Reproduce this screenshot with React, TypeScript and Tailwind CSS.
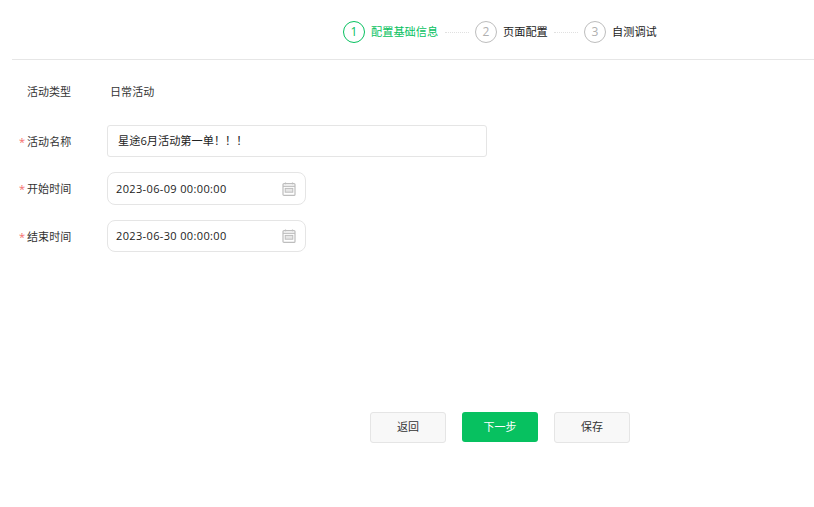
const font = "[font-family:'Open_Sans','Noto_Sans_CJK_SC',sans-serif]";

function Calendar() {
  return (
    <svg width="14" height="14" viewBox="0 0 14 14" fill="none" stroke="#bdbdbd" strokeWidth="1.2">
      <rect x="1" y="1.6" width="12" height="11.8" rx="1" />
      <path d="M3.5 0.6v1.6M10.5 0.6v1.6" />
      <path d="M1 4.3h12" />
      <rect x="3.2" y="6.4" width="7.6" height="3.8" fill="#e6e6e6" strokeWidth="1" />
    </svg>
  );
}

function Step({ n, label, active }: { n: number; label: string; active?: boolean }) {
  return (
    <div className="flex items-center gap-[6px]">
      <div
        className={
          active
            ? "flex h-[22px] w-[22px] items-center justify-center rounded-full border border-[#07c160] text-xs text-[#07c160]"
            : "flex h-[22px] w-[22px] items-center justify-center rounded-full border border-[#bdbdbd] text-xs text-[#b0b0b0]"
        }
      >
        {n}
      </div>
      <span
        className={
          active
            ? "w-[68px] whitespace-nowrap text-[11.2px] text-[#07c160]"
            : "w-[45px] whitespace-nowrap text-[11.2px] text-[#222]"
        }
      >
        {label}
      </span>
    </div>
  );
}

function Dots() {
  return <div className="mx-[6px] w-6 border-t border-dotted border-[#e0e0e0]" />;
}

function Label({ text }: { text: string }) {
  return (
    <div className="flex w-[107px] items-center pl-[19px] pt-[2px] text-[11px] text-[#333]">
      <span className="w-2 text-[#f56c6c]">*</span>
      <span className="tracking-[0.1px]">{text}</span>
    </div>
  );
}

function DateField({ value, tall }: { value: string; tall?: boolean }) {
  return (
    <div
      className={
        tall
          ? "flex h-[33px] w-[199px] items-center justify-between rounded-lg border border-[#e5e5e5] pl-2 pr-[9px] text-[11px] tracking-[0.36px] text-[#222]"
          : "flex h-[32px] w-[199px] items-center justify-between rounded-lg border border-[#e5e5e5] pl-2 pr-[9px] text-[11px] tracking-[0.36px] text-[#222]"
      }
    >
      <span className={tall ? "pt-[2px]" : ""}>{value}</span>
      <Calendar />
    </div>
  );
}

export default function App() {
  return (
    <div className={`${font} h-[507px] w-[814px] overflow-hidden bg-white`}>
      <div className="ml-3 flex h-[60px] items-center border-b border-[#e6e6e6] pl-[331px] pt-[5px]">
        <Step n={1} label="配置基础信息" active />
        <Dots />
        <Step n={2} label="页面配置" />
        <Dots />
        <Step n={3} label="自测调试" />
      </div>

      <div className="flex h-[65px] items-center pb-[1px] text-[11px] text-[#333]">
        <div className="w-[110px] pl-[27px]">活动类型</div>
        <div className="tracking-[0.1px]">日常活动</div>
      </div>

      <div className="flex h-[32px] items-stretch">
        <Label text="活动名称" />
        <div className="flex w-[380px] items-center rounded-[3px] border border-[#e5e5e5] pl-[10px] pt-[1px] text-[11.2px] text-[#222]">
          星途6月活动第一单！！！
        </div>
      </div>

      <div className="mt-[15px] flex">
        <Label text="开始时间" />
        <DateField value="2023-06-09 00:00:00" tall />
      </div>

      <div className="mt-[15px] flex">
        <Label text="结束时间" />
        <DateField value="2023-06-30 00:00:00" />
      </div>

      <div className="mt-[160px] flex gap-4 pl-[370px] text-[11px]">
        <button className="h-[31px] w-[76px] rounded-[3px] border border-[#e5e5e5] bg-[#f8f8f8] text-[#333]">返回</button>
        <button className="h-[30px] w-[76px] rounded-[3px] bg-[#07c160] text-white">下一步</button>
        <button className="h-[31px] w-[76px] rounded-[3px] border border-[#e5e5e5] bg-[#f8f8f8] text-[#333]">保存</button>
      </div>
    </div>
  );
}
